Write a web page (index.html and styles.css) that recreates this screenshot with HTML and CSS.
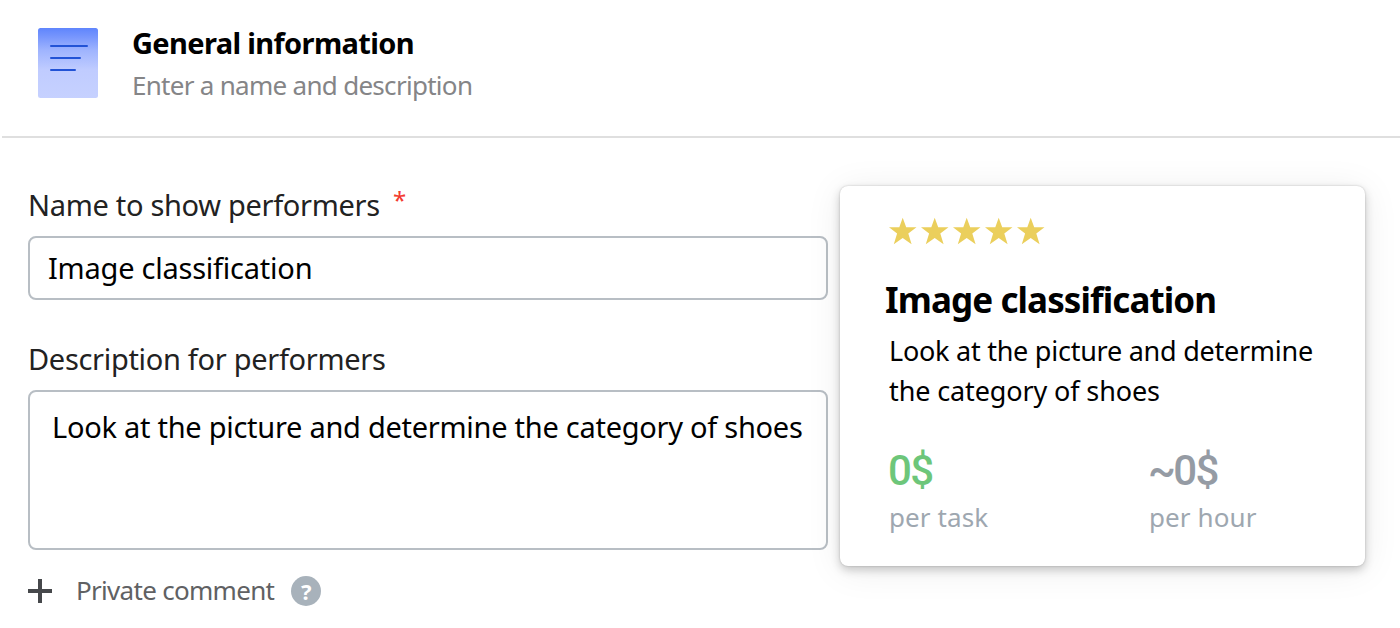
FILE: index.html
```html
<!DOCTYPE html>
<html lang="en">
<head>
<meta charset="utf-8">
<title>General information</title>
<link rel="stylesheet" href="styles.css">
</head>
<body>
<header class="header">
  <svg class="header-icon" width="60" height="70" viewBox="0 0 60 70">
    <defs>
      <linearGradient id="sheet" x1="0" y1="0" x2="0" y2="1">
        <stop offset="0" stop-color="#5f85fd"/>
        <stop offset="0.12" stop-color="#7695fd"/>
        <stop offset="0.32" stop-color="#9fb4fe"/>
        <stop offset="0.6" stop-color="#c0ccff"/>
        <stop offset="1" stop-color="#c6d1ff"/>
      </linearGradient>
    </defs>
    <rect width="60" height="70" rx="2.500" fill="url(#sheet)"/>
    <path d="M13 18H49M13 30H42M13 42H37" stroke="#2253d6" stroke-width="2" stroke-linecap="round"/>
  </svg>
  <div class="header-text">
    <h1 class="header-title">General information</h1>
    <p class="header-subtitle">Enter a name and description</p>
  </div>
</header>
<main class="content">
  <form class="form">
    <label class="label label-name" for="name">Name to show performers<span class="required">*</span></label>
    <input class="field field-name" id="name" type="text" value="Image classification">
    <label class="label label-description" for="description">Description for performers</label>
    <textarea class="field field-description" id="description" spellcheck="false">Look at the picture and determine the category of shoes</textarea>
    <div class="comment">
      <svg class="plus" width="24" height="24" viewBox="0 0 24 24"><path d="M12 0V24M0 12H24" stroke="#46484b" stroke-width="4"/></svg>
      <span class="comment-text">Private comment</span>
      <span class="help">?</span>
    </div>
  </form>
  <aside class="card">
    <svg class="stars" width="156" height="28" viewBox="0 0 156 28" fill="#ebcf5c">
      <defs><path id="star" d="M13.700 .8L17.200 10.200H27.500L19.300 16.600L22.600 27.300L13.700 21L4.800 27.300L8.100 16.600L0 10.200H10.300Z"/></defs>
      <use href="#star"/><use href="#star" x="32"/><use href="#star" x="64"/><use href="#star" x="96"/><use href="#star" x="128"/>
    </svg>
    <h2 class="card-title">Image classification</h2>
    <p class="card-description"><span class="line-one">Look at the picture and determine</span><br><span class="line-two">the category of shoes</span></p>
    <div class="prices">
      <div class="price price-task"><div class="amount">0$</div><div class="unit">per task</div></div>
      <div class="price price-hour"><div class="amount"><span class="approx">~</span>0$</div><div class="unit">per hour</div></div>
    </div>
  </aside>
</main>
</body>
</html>
```
FILE: styles.css
```css
* { box-sizing: border-box; }
body {
  margin: 0;
  height: 628px;
  overflow: hidden;
  background: #fff;
  color: #000;
  font-family: "Noto Sans", sans-serif;
}
h1, h2, p { margin: 0; white-space: nowrap; }
.header {
  display: flex;
  gap: 34px;
  height: 138px;
  margin-left: 2px;
  padding: 28px 0 0 36px;
  border-bottom: 2px solid #dfdfdf;
}
.header-icon { flex: none; }
.header-text { margin-top: -5px; }
.header-title { font-size: 29px; line-height: 40px; font-weight: 700; letter-spacing: -0.64px; }
.header-subtitle { margin-top: 2px; font-size: 26px; line-height: 40px; color: #858587; letter-spacing: -0.71px; }
.content { display: flex; gap: 12px; padding: 48px 0 0 28px; }
.form { width: 800px; flex: none; display: flex; flex-direction: column; }
.label { display: block; height: 50px; line-height: 37px; font-size: 29px; color: #222; white-space: nowrap; }
.label-name { letter-spacing: -0.31px; }
.label-description { margin-top: 40px; letter-spacing: -0.31px; }
.required { margin-left: 13px; color: #f33b2f; font-size: 24px; line-height: 1; vertical-align: 7px; }
.field {
  display: block;
  width: 800px;
  margin: 0;
  border: 2px solid #b8bec4;
  border-radius: 8px;
  outline: 0;
  background: transparent;
  color: #000;
  font-family: inherit;
  font-size: 29px;
  resize: none;
}
.field-name { height: 64px; padding: 0 18px 2px; letter-spacing: -0.23px; }
.field-description { height: 160px; padding: 15px 0 0 22px; line-height: 40px; letter-spacing: -0.27px; overflow: hidden; }
.comment { display: flex; align-items: center; height: 32px; margin-top: 25px; }
.plus { flex: none; }
.comment-text { margin: -2px 0 0 24px; font-size: 26px; line-height: 32px; color: #606163; letter-spacing: -0.7px; }
.help {
  width: 30px;
  height: 30px;
  margin-left: 17px;
  border-radius: 50%;
  background: #a8b2bb;
  color: #fff;
  font-size: 22px;
  font-weight: 700;
  line-height: 30px;
  text-align: center;
}
.card {
  width: 525px;
  height: 380px;
  padding: 31px 0 0 49px;
  border-radius: 8px;
  background: #fff;
  box-shadow: 0 4px 10px rgba(0, 0, 0, .2), 0 0 2px rgba(0, 0, 0, .22), 0 4px 36px rgba(0, 0, 0, .08);
}
.stars { display: block; }
.card-title { margin: 31px 0 0 -4px; font-size: 35px; line-height: 48px; letter-spacing: -0.9px; }
.card-description { margin-top: 7px; font-size: 27px; line-height: 40px; }
.line-one { letter-spacing: -0.25px; }
.line-two { letter-spacing: -0.12px; }
.prices { display: flex; margin-top: 34px; white-space: nowrap; }
.price { width: 260px; flex: none; }
.amount { margin-left: -1px; font-family: Roboto, sans-serif; font-size: 42px; line-height: 52px; font-weight: 500; letter-spacing: -1.6px; color: #6dc67a; }
.approx { letter-spacing: -2.5px; }
.price-hour .amount { color: #959ba4; }
.unit { margin-top: 2px; font-size: 26px; line-height: 36px; color: #9ea7b0; letter-spacing: .1px; }
```
